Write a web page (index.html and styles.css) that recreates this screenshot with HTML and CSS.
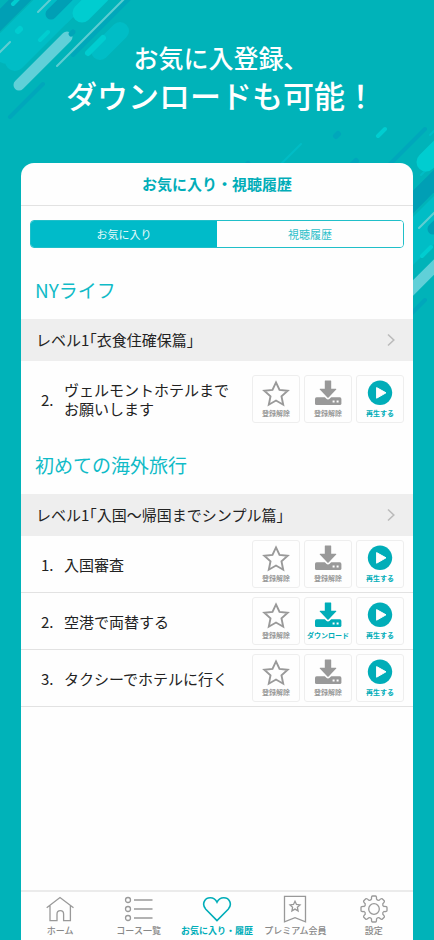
FILE: index.html
```html
<!DOCTYPE html>
<html lang="ja">
<head>
<meta charset="utf-8">
<meta name="viewport" content="width=device-width, initial-scale=1">
<title>お気に入り・視聴履歴</title>
<link rel="stylesheet" href="styles.css">
</head>
<body>
<svg class="symbols" aria-hidden="true">
  <defs>
    <g id="streaks" fill="none" stroke-linecap="round">
      <g stroke="#00bdc6">
        <path stroke-width="20" d="M15 61 80-4"/>
        <path stroke-width="32" d="M8 48 62-6"/>
        <path stroke-width="18" d="M100 51 120 31"/>
        <path stroke-width="3" d="M66 22 92-4"/>
      </g>
      <path stroke="#009fb5" stroke-width="16" d="M-12 32 28-8"/>
      <path stroke="#009fb5" stroke-width="11" d="M51 14 70-5"/>
      <path stroke="#00a7bb" stroke-width="4" d="M10 117 43 84M73 55 132-4"/>
      <path stroke="#00cdd0" stroke-width="19" d="M82 13 100-5"/>
      <path stroke="#00cdd0" stroke-width="6" d="M88 53 103 38M18 31 20 29"/>
      <path stroke="#00cdd0" stroke-width="4" d="M40 40 48 32M13 4 19-2"/>
      <path stroke="#60d0d8" stroke-width="11" d="M19 85 67 37"/>
      <path stroke="#00a5b8" stroke-width="5" d="M71 34 73 32"/>
      <path stroke="#5fcdd2" stroke-width="2" d="M57 66 127-4M38 12 54-4M-6 58 10 42"/>
    </g>
    <symbol id="star" viewBox="0 0 28 28"><path fill="none" stroke="currentColor" stroke-width="1.9" d="M14 2.4 17.5 9.9 25.7 10.8 19.5 16.4 21.2 24.7 14 20.5 6.8 24.7 8.5 16.4 2.3 10.8 10.5 9.9Z"/></symbol>
    <symbol id="download" viewBox="0 0 28 28">
      <rect x="1" y="17.3" width="26.4" height="7.7" rx="1.6" fill="currentColor"/>
      <path fill="currentColor" stroke="#fefefe" stroke-width="3" paint-order="stroke" d="M11.3.6h5.4q.5 0 .5.5v7.6h4.6q1 0 .4.9L14.6 17.6q-.6.6-1.2 0L5.8 9.6q-.6-.9.4-.9h4.6V1.1q0-.5.5-.5Z"/>
      <path fill="#fefefe" d="M18.6 20.6h2v2h-2zM22.6 20.6h2v2h-2z"/>
    </symbol>
    <symbol id="play" viewBox="0 0 28 28"><circle cx="14" cy="12.8" r="12.2" fill="currentColor"/><path fill="#fefefe" stroke="#fefefe" stroke-linejoin="round" d="M10.6 7.6 20 12.8 10.6 18.2Z"/></symbol>
    <symbol id="chevron" viewBox="0 0 8 14"><path fill="none" stroke="currentColor" stroke-width="1.6" d="M1 1.5 6.8 7 1 12.5"/></symbol>
  </defs>
</svg>
<svg class="decor decor-left" viewBox="0 0 150 130" aria-hidden="true"><use href="#streaks"/></svg>
<svg class="decor decor-right" viewBox="220 100 214 250" aria-hidden="true">
  <g fill="none" stroke-linecap="round">
    <path stroke="#00bdc6" stroke-width="34" d="M390 264 450 204"/>
    <path stroke="#009fb5" stroke-width="16" d="M398 217 450 165"/>
    <path stroke="#00bdc6" stroke-width="2" d="M281 164 301 144M430 135 440 125M421 175 440 156"/>
    <path stroke="#00a7bb" stroke-width="6" d="M336 136 338 134M245 167 248 164M350 167 356 161"/>
    <path stroke="#00a7bb" stroke-width="4" d="M385 169 425 129M391 334 425 300"/>
    <path stroke="#00cdd0" stroke-width="4" d="M378 136 385 129M422 256 431 247"/>
    <path stroke="#00cdd0" stroke-width="19" d="M426 162 450 138"/>
    <path stroke="#009fb5" stroke-width="11" d="M433 229 450 212"/>
    <path stroke="#5fcdd2" stroke-width="2" d="M419 228 440 207"/>
    <path stroke="#60d0d8" stroke-width="11" d="M400 301 450 251"/>
  </g>
</svg>

<div class="page">
  <p class="hero"><span class="hero-small">お気に入登録、</span><span class="hero-large">ダウンロードも可能！</span></p>

  <div class="card">
    <header class="card-header"><h1>お気に入り・視聴履歴</h1></header>
    <main>
      <div class="segments">
        <button type="button" class="segment active" aria-pressed="true">お気に入り</button>
        <button type="button" class="segment" aria-pressed="false">視聴履歴</button>
      </div>

      <section>
        <h2>NYライフ</h2>
        <a class="level" href="#level-ny"><span>レベル1「衣食住確保篇」</span><svg class="chevron" aria-hidden="true"><use href="#chevron"/></svg></a>
        <ul class="lessons lessons-open">
          <li class="lesson">
            <span class="number">2.</span><span class="name">ヴェルモントホテルまで<br>お願いします</span>
            <button type="button" class="action"><svg aria-hidden="true"><use href="#star"/></svg>登録解除</button>
            <button type="button" class="action"><svg aria-hidden="true"><use href="#download"/></svg>登録解除</button>
            <button type="button" class="action on"><svg aria-hidden="true"><use href="#play"/></svg>再生する</button>
          </li>
        </ul>
      </section>

      <section>
        <h2>初めての海外旅行</h2>
        <a class="level" href="#level-travel"><span>レベル1「入国〜帰国までシンプル篇」</span><svg class="chevron" aria-hidden="true"><use href="#chevron"/></svg></a>
        <ul class="lessons">
          <li class="lesson">
            <span class="number">1.</span><span class="name">入国審査</span>
            <button type="button" class="action"><svg aria-hidden="true"><use href="#star"/></svg>登録解除</button>
            <button type="button" class="action"><svg aria-hidden="true"><use href="#download"/></svg>登録解除</button>
            <button type="button" class="action on"><svg aria-hidden="true"><use href="#play"/></svg>再生する</button>
          </li>
          <li class="lesson">
            <span class="number">2.</span><span class="name">空港で両替する</span>
            <button type="button" class="action"><svg aria-hidden="true"><use href="#star"/></svg>登録解除</button>
            <button type="button" class="action on"><svg aria-hidden="true"><use href="#download"/></svg>ダウンロード</button>
            <button type="button" class="action on"><svg aria-hidden="true"><use href="#play"/></svg>再生する</button>
          </li>
          <li class="lesson">
            <span class="number">3.</span><span class="name">タクシーでホテルに行く</span>
            <button type="button" class="action"><svg aria-hidden="true"><use href="#star"/></svg>登録解除</button>
            <button type="button" class="action"><svg aria-hidden="true"><use href="#download"/></svg>登録解除</button>
            <button type="button" class="action on"><svg aria-hidden="true"><use href="#play"/></svg>再生する</button>
          </li>
        </ul>
      </section>
    </main>

    <nav class="tabs">
      <a class="tab" href="#home"><svg viewBox="0 0 30 30" aria-hidden="true"><path d="M1.7 13.7 15 3.6 28.5 13.7M5 11.5V26.6H12V20a3.3 3.3 0 0 1 6.6 0V26.6H25.4V11.5"/></svg>ホーム</a>
      <a class="tab" href="#courses"><svg viewBox="0 0 30 30" aria-hidden="true"><circle cx="4" cy="6" r="2.5"/><circle cx="4" cy="15" r="2.5"/><circle cx="4" cy="24" r="2.5"/><path d="M10 6H28.5M10 15H28.5M10 24H28.5"/></svg>コース一覧</a>
      <a class="tab current" href="#favorites" aria-current="page"><svg viewBox="0 0 30 30" aria-hidden="true"><path d="M15 26.6 3.8 15.2C-.6 10.3 2.4 3.8 8.3 3.8 11.6 3.8 13.8 5.8 15 8.2 16.2 5.8 18.4 3.8 21.7 3.8 27.6 3.8 30.6 10.3 26.2 15.2Z"/></svg>お気に入り・履歴</a>
      <a class="tab" href="#premium"><svg viewBox="0 0 30 30" aria-hidden="true"><path d="M4.5 2.4H25.5V27.8L15 23.7 4.5 27.8Z"/><path d="M15 7.2 16.5 10.5 20 10.9 17.4 13.3 18.1 16.9 15 15.1 11.9 16.9 12.6 13.3 10 10.9 13.5 10.5Z"/></svg>プレミアム会員</a>
      <a class="tab" href="#settings"><svg viewBox="0 0 30 30" aria-hidden="true"><path d="M12.5 5.1Q12.3 2 13.6 2H16.4Q17.7 2 17.5 5.1Q18.2 6.6 20.2 6.2Q22.3 4 23.2 4.8L25.2 6.8Q26 7.7 23.8 9.8Q23.4 11.8 24.9 12.5Q28 12.3 28 13.6V16.4Q28 17.7 24.9 17.5Q23.4 18.2 23.8 20.2Q26 22.3 25.2 23.2L23.2 25.2Q22.3 26 20.2 23.8Q18.2 23.4 17.5 24.9Q17.7 28 16.4 28H13.6Q12.3 28 12.5 24.9Q11.8 23.4 9.8 23.8Q7.7 26 6.8 25.2L4.8 23.2Q4 22.3 6.2 20.2Q6.6 18.2 5.1 17.5Q2 17.7 2 16.4V13.6Q2 12.3 5.1 12.5Q6.6 11.8 6.2 9.8Q4 7.7 4.8 6.8L6.8 4.8Q7.7 4 9.8 6.2Q11.8 6.6 12.5 5.1Z"/><circle cx="15" cy="15" r="5.3"/></svg>設定</a>
    </nav>
  </div>
</div>
</body>
</html>
```
FILE: styles.css
```css
* {
  box-sizing: border-box;
}

body {
  margin: 0;
  position: relative;
  background: #00b3b9;
  color: #222;
  font-family: "Noto Sans CJK JP", sans-serif;
  font-size: 15px;
}

button {
  font-family: inherit;
  cursor: pointer;
}

a {
  color: inherit;
  text-decoration: none;
}

.symbols {
  position: absolute;
  width: 0;
  height: 0;
}

.decor {
  position: absolute;
  top: 0;
}

.decor-left {
  left: 0;
  width: 150px;
  height: 130px;
}

.decor-right {
  top: 100px;
  right: 0;
  width: 214px;
  height: 250px;
}

.page {
  position: relative;
  display: flex;
  flex-direction: column;
  min-height: 100vh;
  padding: 0 21px;
}

.hero {
  display: flex;
  flex-direction: column;
  align-items: center;
  margin: 0;
  padding: 39px 0 48px 8px;
  color: #fff;
  font-weight: 500;
  white-space: nowrap;
}

.hero-small {
  font-size: 25px;
  line-height: 36px;
}

.hero-large {
  font-size: 31px;
  line-height: 40px;
}

.card {
  display: flex;
  flex: 1;
  flex-direction: column;
  overflow: hidden;
  border-radius: 13px 13px 0 0;
  background: #fefefe;
}

.card-header {
  border-bottom: 1px solid #e2e2e2;
}

h1 {
  margin: 0;
  color: #00adb8;
  font-size: 15px;
  font-weight: 700;
  line-height: 42px;
  text-align: center;
}

.segments {
  display: flex;
  margin: 14px 9px 0;
  border: 1px solid #20bfc9;
  border-radius: 4px;
  overflow: hidden;
}

.segment {
  flex: 1;
  padding: 0;
  border: 0;
  background: #fefefe;
  color: #2fc0ca;
  font-size: 11px;
  line-height: 26px;
}

.segment.active {
  background: #00bbc9;
  color: #e8fafb;
}

h2 {
  margin: 0;
  padding: 28px 14px 15px;
  color: #10bbc7;
  font-size: 19px;
  font-weight: 400;
  line-height: 28px;
}

.level {
  display: flex;
  align-items: center;
  justify-content: space-between;
  padding: 0 18px 0 15px;
  background: #eee;
  font-feature-settings: "halt";
  line-height: 42px;
}

.chevron {
  width: 8px;
  height: 14px;
  color: #bbb;
}

.lessons {
  margin: 0;
  padding: 0;
  list-style: none;
}

.lesson {
  display: flex;
  align-items: center;
  gap: 4px;
  padding: 4px 9px 4px 20px;
  border-bottom: 1px solid #e2e2e2;
}

.lessons-open .lesson {
  padding-top: 14px;
  padding-bottom: 0;
  border-bottom: 0;
}

.number {
  width: 19px;
}

.name {
  flex: 1;
  line-height: 19px;
  white-space: nowrap;
}

.action {
  display: flex;
  flex-direction: column;
  align-items: center;
  width: 48px;
  height: 48px;
  padding: 4px 0 0;
  border: 1px solid #eee;
  border-radius: 3px;
  background: #fefefe;
  color: #999;
  font-size: 7px;
  font-weight: 700;
  line-height: 10px;
  white-space: nowrap;
}

.action svg {
  width: 28px;
  height: 28px;
}

.on {
  color: #00adb8;
}

.tabs {
  display: flex;
  margin-top: auto;
  border-top: 2px solid #ebebeb;
}

.tab {
  display: flex;
  flex: 1 1 0;
  flex-direction: column;
  align-items: center;
  padding: 2px 0;
  color: #888;
  font-size: 9px;
  font-weight: 500;
  line-height: 14px;
  white-space: nowrap;
}

.tab svg {
  width: 30px;
  height: 30px;
  fill: none;
  stroke: #999;
  stroke-width: 1.3;
}

.tab.current {
  color: #00adb8;
  font-weight: 700;
}

.tab.current svg {
  stroke: #00adb8;
  stroke-width: 1.6;
}
```
